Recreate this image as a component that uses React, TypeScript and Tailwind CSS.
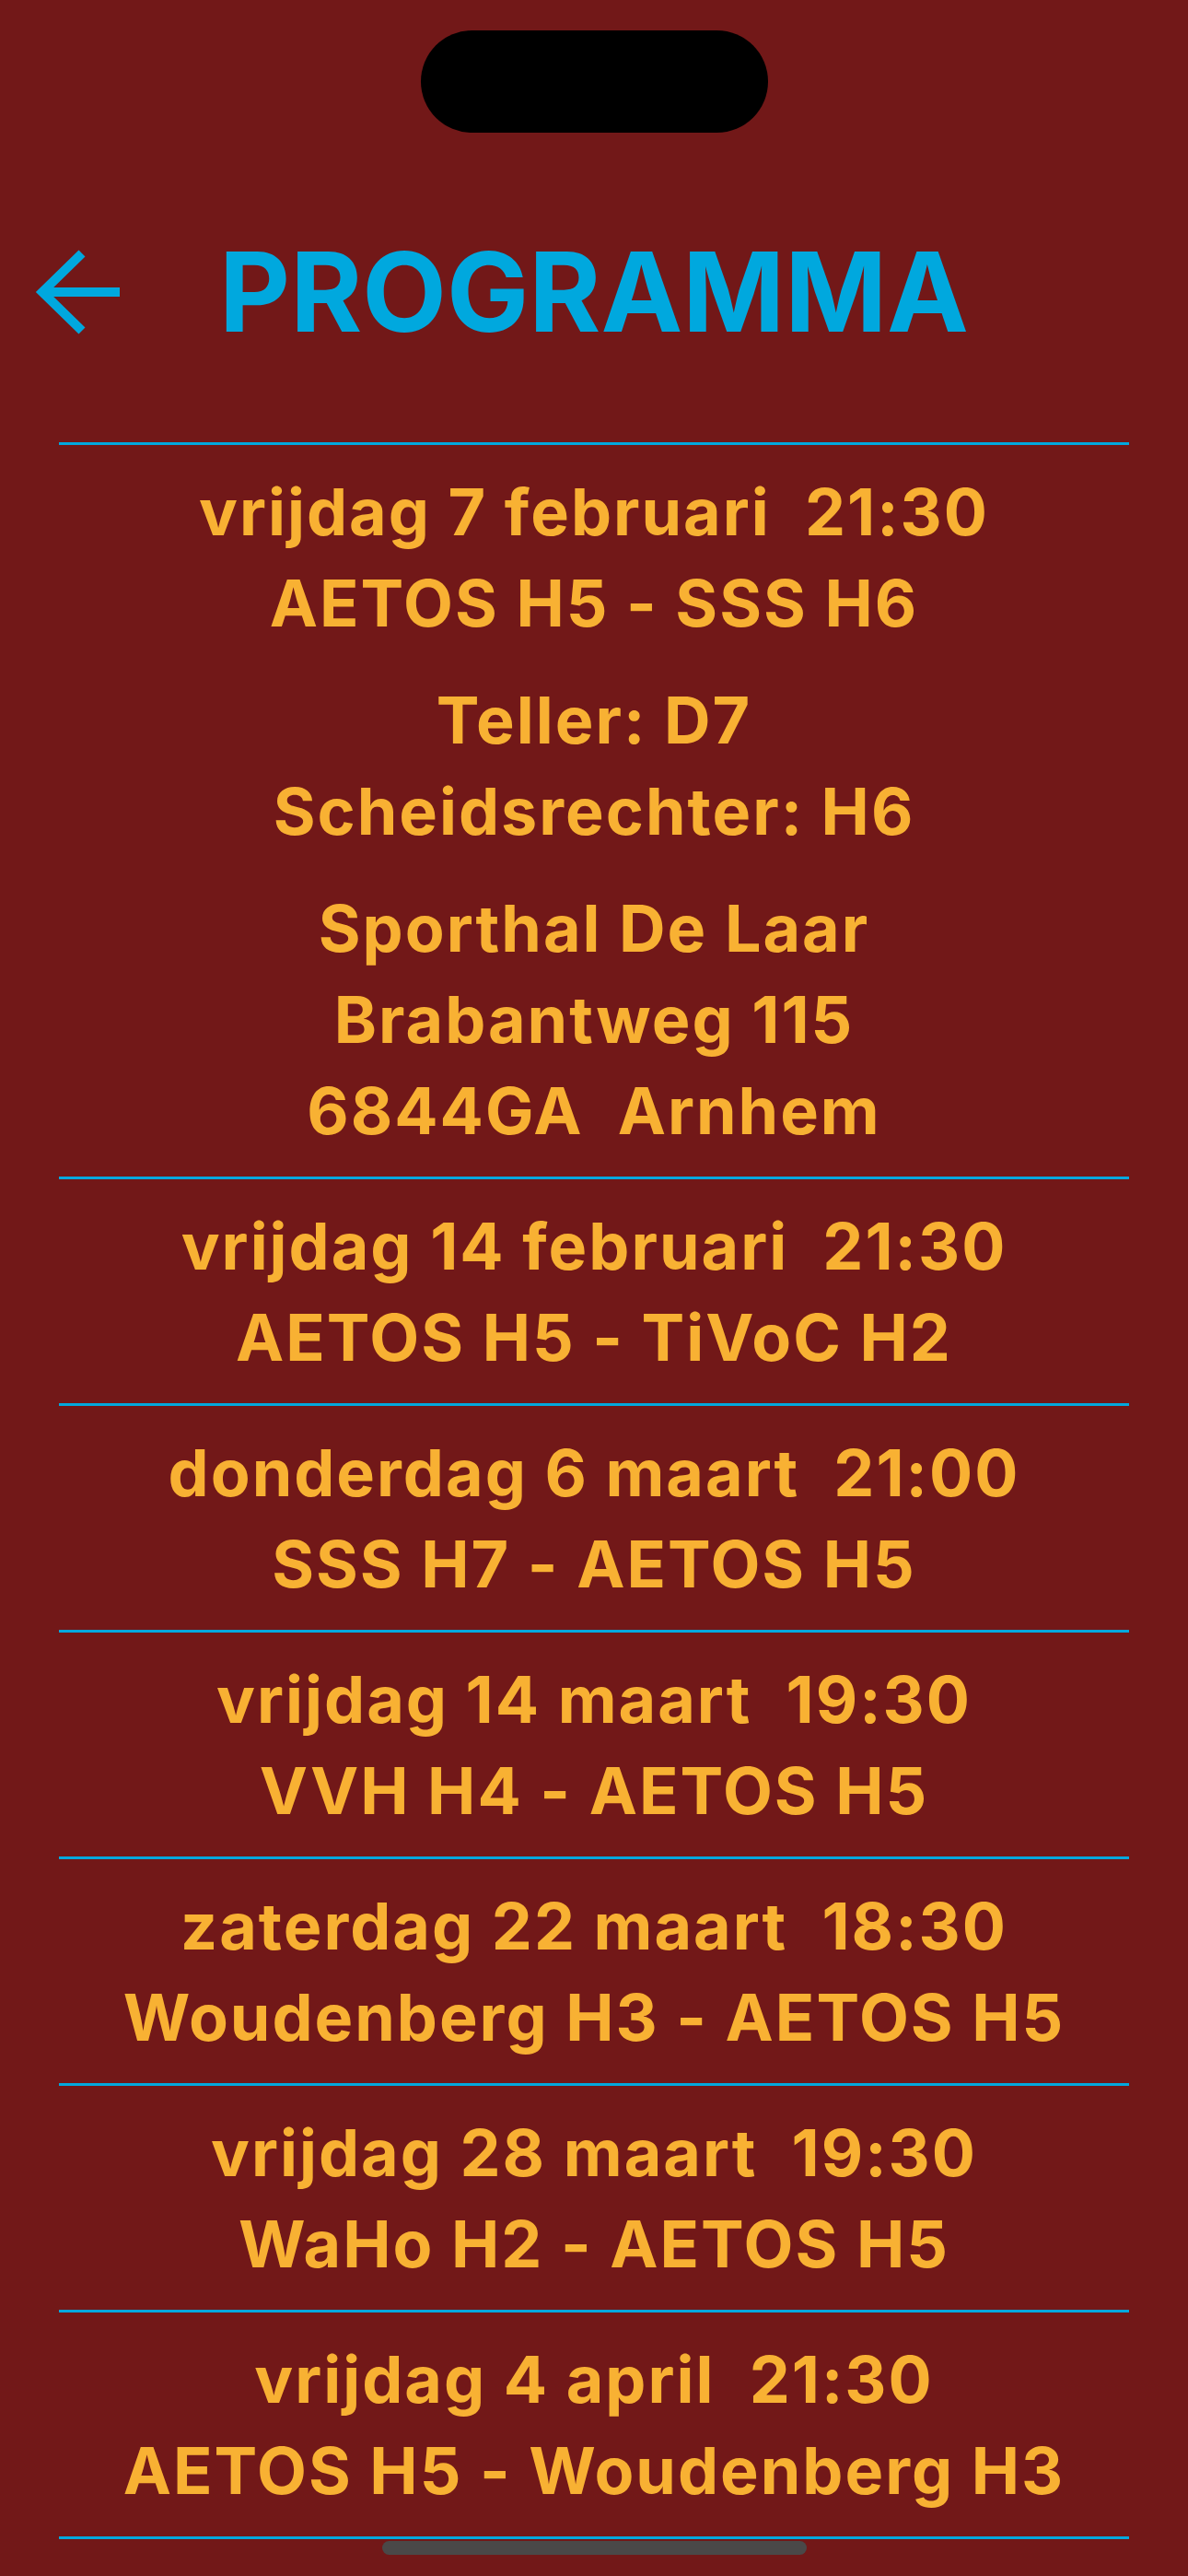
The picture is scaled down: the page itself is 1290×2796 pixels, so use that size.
import React from "react";

type Match = {
  date: string;
  time: string;
  teams: string;
  extra?: string[][];
};

const matches: Match[] = [
  {
    date: "vrijdag 7 februari",
    time: "21:30",
    teams: "AETOS H5 - SSS H6",
    extra: [
      ["Teller: D7", "Scheidsrechter: H6"],
      ["Sporthal De Laar", "Brabantweg 115", "6844GA  Arnhem"],
    ],
  },
  { date: "vrijdag 14 februari", time: "21:30", teams: "AETOS H5 - TiVoC H2" },
  { date: "donderdag 6 maart", time: "21:00", teams: "SSS H7 - AETOS H5" },
  { date: "vrijdag 14 maart", time: "19:30", teams: "VVH H4 - AETOS H5" },
  { date: "zaterdag 22 maart", time: "18:30", teams: "Woudenberg H3 - AETOS H5" },
  { date: "vrijdag 28 maart", time: "19:30", teams: "WaHo H2 - AETOS H5" },
  { date: "vrijdag 4 april", time: "21:30", teams: "AETOS H5 - Woudenberg H3" },
];

const BackArrow = () => (
  <svg width="92" height="92" viewBox="0 0 92 92" fill="none">
    <path
      d="M51 4 L8 46 L51 88 M8 46 H92"
      stroke="#00a8de"
      strokeWidth="10"
      strokeLinejoin="miter"
    />
  </svg>
);

const App: React.FC = (): JSX.Element => {
  return (
    <div className="w-[1290px] min-h-[2796px] bg-[#721818] flex flex-col font-['Inter','Noto_Sans',sans-serif]">
      <div className="mt-[33px] mx-auto w-[377px] h-[111px] rounded-full bg-black" />

      <div className="grid grid-cols-[1fr_auto_1fr] items-center h-[336px] pt-[10px]">
        <div className="pl-[38px] flex">
          <BackArrow />
        </div>
        <h1 className="text-[#00a8de] text-[119px] font-bold leading-none">
          PROGRAMMA
        </h1>
        <div />
      </div>

      <div className="mx-[64px] border-t-[3px] border-[#00a8de]">
        {matches.map((m, i) => (
          <div
            key={i}
            className="border-b-[3px] border-[#00a8de] pt-[23px] pb-[22px] text-center text-[#f8b133] text-[70px] font-bold tracking-[2px] leading-[99px]"
          >
            <p className="whitespace-pre">
              {m.date}  {m.time}
            </p>
            <p>{m.teams}</p>
            {m.extra?.map((group, g) => (
              <div key={g} className="mt-[28px]">
                {group.map((line) => (
                  <p key={line} className="whitespace-pre">
                    {line}
                  </p>
                ))}
              </div>
            ))}
          </div>
        ))}
      </div>

      <div className="mt-[2px] mx-auto w-[461px] h-[15px] rounded-full bg-[#4a4848]" />
    </div>
  );
};

export default App;
